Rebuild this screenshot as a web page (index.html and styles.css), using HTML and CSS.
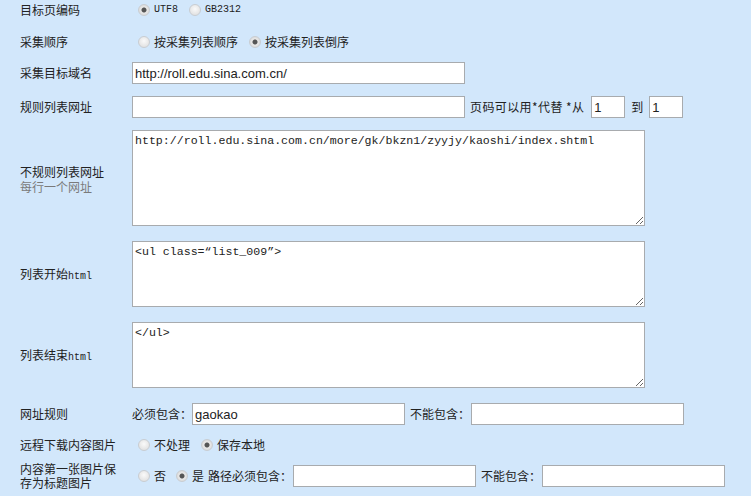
FILE: index.html
```html
<!DOCTYPE html>
<html lang="zh-CN">

<head>
  <meta charset="UTF-8">
  <title>采集规则设置</title>
  <link rel="stylesheet" href="styles.css">
</head>

<body>
  <div class="form">
    <div class="row row-first">
      <div class="label">目标页编码</div>
      <div class="field">
        <label class="opt code"><input type="radio" name="charset" checked>UTF8</label>
        <label class="opt code gap"><input type="radio" name="charset">GB2312</label>
      </div>
    </div>

    <div class="row row-radio">
      <div class="label">采集顺序</div>
      <div class="field">
        <label class="opt"><input type="radio" name="order">按采集列表顺序</label>
        <label class="opt gap-lg"><input type="radio" name="order" checked>按采集列表倒序</label>
      </div>
    </div>

    <div class="row">
      <div class="label">采集目标域名</div>
      <div class="field">
        <input type="text" class="txt txt-long" value="http://roll.edu.sina.com.cn/">
      </div>
    </div>

    <div class="row">
      <div class="label">规则列表网址</div>
      <div class="field">
        <input type="text" class="txt txt-long">
        <span class="note page">页码可以用*代替 *从</span>
        <input type="text" class="txt txt-num" value="1">
        <span class="note to">到</span>
        <input type="text" class="txt txt-num" value="1">
      </div>
    </div>

    <div class="row">
      <div class="label">
        <div>不规则列表网址</div>
        <div class="hint">每行一个网址</div>
      </div>
      <div class="field">
        <textarea class="area area-tall">http://roll.edu.sina.com.cn/more/gk/bkzn1/zyyjy/kaoshi/index.shtml</textarea>
      </div>
    </div>

    <div class="row">
      <div class="label">列表开始<span class="code">html</span></div>
      <div class="field">
        <textarea class="area">&lt;ul class=“list_009”&gt;</textarea>
      </div>
    </div>

    <div class="row">
      <div class="label">列表结束<span class="code">html</span></div>
      <div class="field">
        <textarea class="area">&lt;/ul&gt;</textarea>
      </div>
    </div>

    <div class="row">
      <div class="label">网址规则</div>
      <div class="field">
        <span>必须包含：</span>
        <input type="text" class="txt txt-mid" value="gaokao">
        <span class="note">不能包含：</span>
        <input type="text" class="txt txt-mid">
      </div>
    </div>

    <div class="row row-radio">
      <div class="label">远程下载内容图片</div>
      <div class="field">
        <label class="opt"><input type="radio" name="remote">不处理</label>
        <label class="opt gap-lg"><input type="radio" name="remote" checked>保存本地</label>
      </div>
    </div>

    <div class="row row-last">
      <div class="label">内容第一张图片保存为标题图片</div>
      <div class="field">
        <label class="opt"><input type="radio" name="thumb">否</label>
        <label class="opt gap-sm"><input type="radio" name="thumb" checked>是</label>
        <span class="note path">路径必须包含：</span>
        <input type="text" class="txt txt-short">
        <span class="note">不能包含：</span>
        <input type="text" class="txt txt-short">
      </div>
    </div>
  </div>
</body>

</html>
```

FILE: styles.css
```css
* {
  box-sizing: border-box;
  margin: 0;
  padding: 0;
}

body {
  font-family: "Noto Sans CJK SC", "Liberation Sans", sans-serif;
  font-size: 12px;
  color: #222;
  background-color: #d2e7fb;
  overflow: hidden;
}

.row {
  display: flex;
  align-items: center;
  padding: 6px 0;
}

.row-first {
  height: 28px;
  padding: 0 0 8px;
}

.row-radio {
  height: 28px;
}

.row-last {
  padding: 3px 0 0;
}

.label {
  width: 132px;
  padding-left: 20px;
  line-height: 14px;
  flex-shrink: 0;
}

.row-last .label {
  padding-right: 12px;
}

.hint {
  margin-top: 1px;
  color: #7a7a7a;
}

.field {
  display: flex;
  align-items: center;
  line-height: 14px;
  white-space: nowrap;
}

.code {
  font-family: "Liberation Mono", monospace;
  font-size: 10px;
}

.opt {
  display: flex;
  align-items: center;
}

.opt input {
  appearance: none;
  width: 12px;
  height: 12px;
  margin: 0 4px 0 6px;
  border-radius: 50%;
  border: 1px solid #c9cdd2;
  background: radial-gradient(circle at 50% 40%, #fafafa 0, #e4e4e4 70%);
}

.opt input:checked {
  background: radial-gradient(circle, #555 0, #555 2px, #e9e9e9 3px, #dcdcdc 70%);
}

.gap {
  margin-left: 5px;
}

.gap-lg {
  margin-left: 5px;
}

.gap-sm {
  margin-left: 4px;
}

.txt {
  height: 22px;
  border: 1px solid #a8abae;
  background-color: #fff;
  padding: 0 2px;
  font-family: "Liberation Sans", sans-serif;
  font-size: 13px;
  color: #222;
}

.txt-long {
  width: 333px;
}

.txt-num {
  width: 34px;
}

.txt-mid {
  width: 213px;
}

.txt-short {
  width: 183px;
}

.note {
  margin: 0 1px 0 5px;
}

.page {
  margin-right: 7px;
  letter-spacing: 0.4px;
}

.to {
  margin: 0 6px 0 6px;
}

.path {
  margin-left: 4px;
}

.area {
  display: block;
  width: 513px;
  height: 66px;
  margin-bottom: 3px;
  border: 1px solid #a8abae;
  background-color: #fff;
  padding: 2px 2px;
  font-family: "Liberation Mono", monospace;
  font-size: 11.6px;
  line-height: 16px;
  color: #222;
}

.area-tall {
  height: 96px;
}
```
